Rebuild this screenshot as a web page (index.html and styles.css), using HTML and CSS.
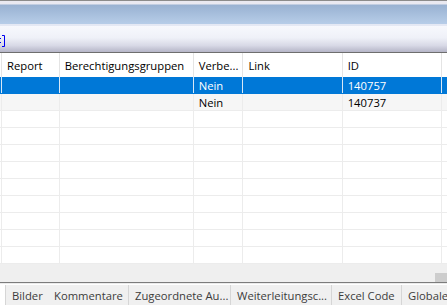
FILE: index.html
```html
<!doctype html>
<html lang="de">
  <head>
    <meta charset="utf-8" />
    <title>Reports</title>
    <link rel="stylesheet" href="styles.css">
  </head>
  <body>
    <div class="window">
      <!-- Title and toolbar -->
      <div class="caption"></div>
      <div class="toolbar">
        <svg class="tool-glyph" width="6" height="12" viewBox="0 0 6 12">
          <rect x="0" y="3" width="1" height="1" fill="#0000f0" />
          <rect x="0" y="7" width="1" height="1" fill="#0000f0" />
          <path d="M2 0.5 H4.5 V11.5 H2" fill="none" stroke="#0000f0" stroke-width="1" />
        </svg>
      </div>

      <!-- Grid -->
      <div class="grid">
        <div class="row head">
          <div class="cell lead"></div>
          <div class="cell c-report">Report</div>
          <div class="cell c-groups">Berechtigungsgruppen</div>
          <div class="cell c-verb">Verbe...</div>
          <div class="cell c-link">Link</div>
          <div class="cell c-id">ID</div>
          <div class="cell rest"></div>
        </div>
        <div class="row selected">
          <div class="cell lead"></div>
          <div class="cell c-report"></div>
          <div class="cell c-groups"></div>
          <div class="cell c-verb">Nein</div>
          <div class="cell c-link"></div>
          <div class="cell c-id">140757</div>
          <div class="cell rest"></div>
        </div>
        <div class="row alt">
          <div class="cell lead"></div>
          <div class="cell c-report"></div>
          <div class="cell c-groups"></div>
          <div class="cell c-verb">Nein</div>
          <div class="cell c-link"></div>
          <div class="cell c-id">140737</div>
          <div class="cell rest"></div>
        </div>
        <div class="row empty"><div class="cell lead"></div><div class="cell c-report"></div><div class="cell c-groups"></div><div class="cell c-verb"></div><div class="cell c-link"></div><div class="cell c-id"></div><div class="cell rest"></div></div>
        <div class="row empty"><div class="cell lead"></div><div class="cell c-report"></div><div class="cell c-groups"></div><div class="cell c-verb"></div><div class="cell c-link"></div><div class="cell c-id"></div><div class="cell rest"></div></div>
        <div class="row empty"><div class="cell lead"></div><div class="cell c-report"></div><div class="cell c-groups"></div><div class="cell c-verb"></div><div class="cell c-link"></div><div class="cell c-id"></div><div class="cell rest"></div></div>
        <div class="row empty"><div class="cell lead"></div><div class="cell c-report"></div><div class="cell c-groups"></div><div class="cell c-verb"></div><div class="cell c-link"></div><div class="cell c-id"></div><div class="cell rest"></div></div>
        <div class="row empty"><div class="cell lead"></div><div class="cell c-report"></div><div class="cell c-groups"></div><div class="cell c-verb"></div><div class="cell c-link"></div><div class="cell c-id"></div><div class="cell rest"></div></div>
        <div class="row empty"><div class="cell lead"></div><div class="cell c-report"></div><div class="cell c-groups"></div><div class="cell c-verb"></div><div class="cell c-link"></div><div class="cell c-id"></div><div class="cell rest"></div></div>
        <div class="row empty"><div class="cell lead"></div><div class="cell c-report"></div><div class="cell c-groups"></div><div class="cell c-verb"></div><div class="cell c-link"></div><div class="cell c-id"></div><div class="cell rest"></div></div>
        <div class="row empty"><div class="cell lead"></div><div class="cell c-report"></div><div class="cell c-groups"></div><div class="cell c-verb"></div><div class="cell c-link"></div><div class="cell c-id"></div><div class="cell rest"></div></div>
        <div class="row empty"><div class="cell lead"></div><div class="cell c-report"></div><div class="cell c-groups"></div><div class="cell c-verb"></div><div class="cell c-link"></div><div class="cell c-id"></div><div class="cell rest"></div></div>
      </div>

      <!-- Horizontal scrollbar -->
      <div class="hscroll">
        <div class="hscroll-thumb"></div>
      </div>

      <!-- Tabs -->
      <div class="tabs">
        <div class="tab t-bilder">Bilder</div>
        <div class="tab t-komm">Kommentare</div>
        <div class="tab t-zug">Zugeordnete Au...</div>
        <div class="tab t-weiter">Weiterleitungsc...</div>
        <div class="tab t-excel">Excel Code</div>
        <div class="tab t-global">Globaler</div>
      </div>
    </div>
  </body>
</html>
```

FILE: styles.css
```css
* {
  box-sizing: border-box;
}

html,
body {
  margin: 0;
  width: 447px;
  height: 305px;
  overflow: hidden;
  background: #fff;
}

body {
  font-family: 'Open Sans', 'Noto Sans', sans-serif;
  font-size: 11.25px;
  color: #000;
}

.window {
  display: flex;
  flex-direction: column;
  height: 305px;
}

/* Caption bar */
.caption {
  height: 26px;
  border-top: 1px solid #8c8c8c;
  background: linear-gradient(
    to bottom,
    #e9e9f1 0px,
    #e9e9f1 3px,
    #99b2d2 4px,
    #b7cde8 23px,
    #e4e8f4 23px,
    #e4e8f4 25px
  );
}

.toolbar {
  height: 27px;
  border-bottom: 1px solid #6e6e6e;
  background: linear-gradient(to bottom, #f7f8fd 0%, #eff1f8 45%, #d8d9e6 75%, #b5b5c7 100%);
  display: flex;
  align-items: center;
  padding-top: 4px;
}

.tool-glyph {
  display: block;
}

/* Grid */
.grid {
  height: 211px;
  background: #fff;
}

.row {
  display: flex;
  height: 17px;
  border-bottom: 1px solid #ececec;
}

.row.head {
  height: 24px;
  border-bottom: none;
}

.cell {
  height: 100%;
  padding-left: 5px;
  border-right: 1px solid #ececec;
  white-space: nowrap;
  overflow: hidden;
  display: flex;
  align-items: center;
  line-height: 16px;
  padding-top: 1px;
}

.head .cell {
  border-right-color: #e4e4e4;
}

.lead {
  width: 2px;
  padding: 0;
}

.c-report {
  width: 58px;
}

.c-groups {
  width: 135px;
}

.c-verb {
  width: 50px;
}

.c-link {
  width: 100px;
}

.c-id {
  width: 100px;
}

.rest {
  flex: 1;
  border-right: none;
}

.row.selected {
  background: #0078d7;
  color: #fff;
  border-bottom-color: #0078d7;
}

.row.selected .cell {
  border-right-color: #d9e8f6;
}

.row.alt {
  background: #f6f6f6;
}

/* Scrollbar */
.hscroll {
  height: 18px;
  background: #efefef;
  display: flex;
  justify-content: flex-end;
  align-items: flex-end;
}

.hscroll-thumb {
  width: 12px;
  height: 9px;
  background: #cdcdcd;
}

/* Tabs */
.tabs {
  flex: 1;
  display: flex;
  border-top: 1px solid #7c7c7c;
  box-shadow: inset 0 1px 0 #ebebeb;
  padding: 2px 0 0 5px;
  color: #3c3c3c;
}

.tab {
  height: 100%;
  display: flex;
  align-items: center;
  white-space: nowrap;
  overflow: hidden;
  background: #f0f0f0;
  border-right: 1px solid #d6d6d6;
  padding-left: 6px;
}

.t-bilder {
  width: 43px;
  border-left: 1px solid #d6d6d6;
  border-right: none;
}

.t-komm {
  width: 81px;
  padding-left: 6px;
}

.t-zug {
  width: 102px;
}

.t-weiter {
  width: 101px;
}

.t-excel {
  width: 70px;
}

.t-global {
  flex: 1;
  border-right: none;
}
```
